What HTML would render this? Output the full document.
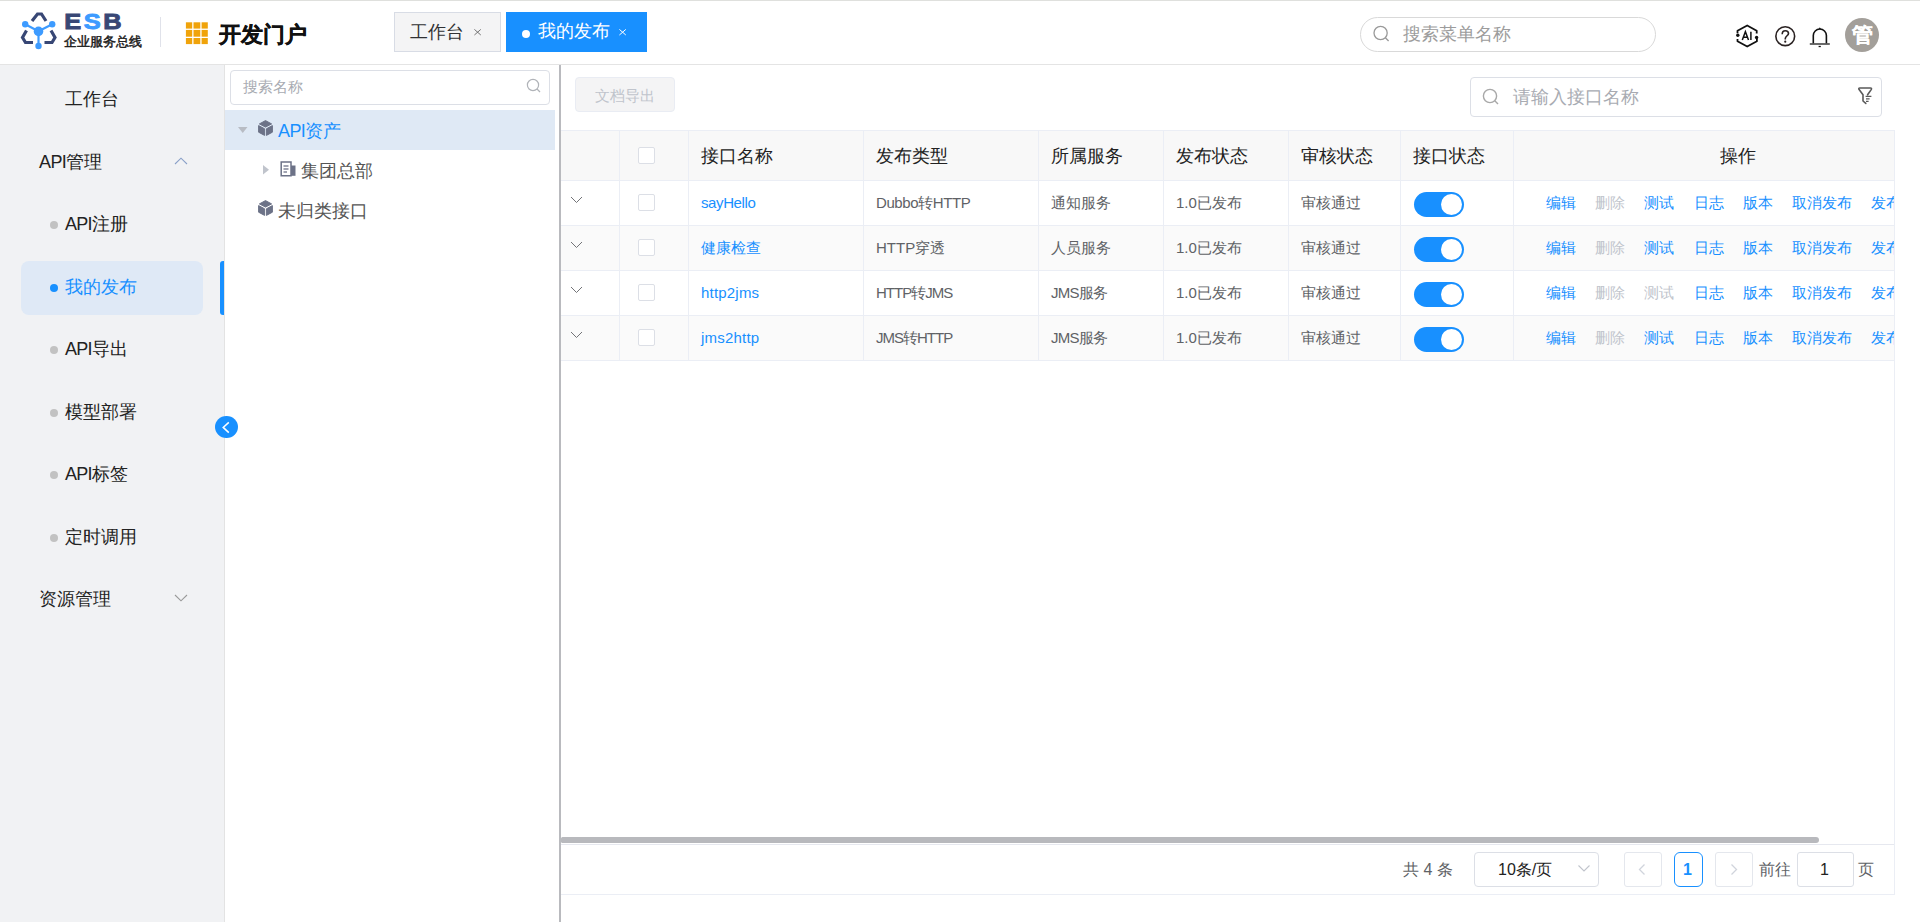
<!DOCTYPE html>
<html><head><meta charset="utf-8">
<style>
*{box-sizing:border-box;margin:0;padding:0}
html,body{width:1920px;height:922px;overflow:hidden;background:#fff;font-family:"Liberation Sans",sans-serif;color:#303133}
.a{position:absolute}
.t{position:absolute;white-space:nowrap;line-height:1}
#hdr{left:0;top:0;width:1920px;height:65px;background:#fff;border-top:1px solid #dfe0dd;border-bottom:1px solid #e4e4e4}
#side{left:0;top:65px;width:225px;height:857px;background:#f1f2f4;border-right:1px solid #e3e3e3}
#tree{left:225px;top:65px;width:334px;height:857px;background:#fff}
#vdiv{left:559px;top:65px;width:2px;height:857px;background:#b9babe}
.mi{font-size:18px;color:#222}
.dot{position:absolute;width:8px;height:8px;border-radius:50%;background:#c2c2c2}
.chev{position:absolute}
.cell{position:absolute;font-size:15px;color:#606266;white-space:nowrap;line-height:1}
.lat{letter-spacing:-0.4px}
.hcell{position:absolute;font-size:18px;color:#222;white-space:nowrap;line-height:1}
.vb{position:absolute;width:1px;background:#ebeef5}
.hb{position:absolute;height:1px;background:#ebeef5}
.cb{position:absolute;width:17px;height:17px;border:1px solid #dcdfe6;border-radius:2px;background:#fff}
.sw{position:absolute;width:50px;height:25px;border-radius:13px;background:#1890ff}
.sw::after{content:"";position:absolute;right:2px;top:2px;width:21px;height:21px;border-radius:50%;background:#fff}
.op{position:absolute;font-size:15px;color:#1890ff;white-space:nowrap;line-height:1}
.op.dis{color:#c0c4cc}
</style></head><body>

<!-- HEADER -->
<div id="hdr" class="a">
  <!-- logo icon -->
  <svg class="a" style="left:18px;top:9px" width="42" height="42" viewBox="18 10 42 42">
    <g fill="none" stroke="#384775" stroke-width="3.2" stroke-linejoin="miter" stroke-linecap="butt">
      <polyline points="32,21 37.5,14 41.5,14 46,21"/>
      <polyline points="26.5,30.5 22.5,37.5 25.5,42.5 33,42.5"/>
      <polyline points="51,30.5 55,37.5 52,42.5 44.5,42.5"/>
    </g>
    <g stroke="#3d9bff" stroke-width="2.2">
      <line x1="25.2" y1="24.2" x2="38.5" y2="31.2"/>
      <line x1="52.2" y1="24.2" x2="38.5" y2="31.2"/>
      <line x1="38.5" y1="31.2" x2="38.5" y2="46"/>
    </g>
    <g fill="#3d9bff">
      <circle cx="25.2" cy="24.2" r="3.2"/>
      <circle cx="52.2" cy="24.2" r="3.2"/>
      <circle cx="38.5" cy="31.4" r="4.8"/>
      <circle cx="38.5" cy="46" r="3.2"/>
    </g>
  </svg>
  <svg class="a" style="left:60px;top:8px" width="70" height="26" viewBox="60 8 70 26">
    <text x="64.2" y="27.9" font-family="Liberation Sans" font-weight="bold" font-size="22.5" fill="#384775" stroke="#384775" stroke-width="0.9" transform="translate(64.2 0) scale(1.13 1) translate(-64.2 0)" letter-spacing="2.3">E<tspan fill="#3d9bff" stroke="#3d9bff">S</tspan>B</text>
  </svg>
  <div class="t" style="left:64px;top:34px;font-size:13px;color:#1a1a1a;-webkit-text-stroke:0.45px #1a1a1a">企业服务总线</div>
  <div class="a" style="left:160px;top:16px;width:1px;height:30px;background:#e0e2ea"></div>
  <!-- grid -->
  <svg class="a" style="left:185px;top:21px" width="24" height="23" viewBox="0 0 24 23">
    <g fill="#f0a30a">
      <rect x="0.9" y="0.3" width="6.3" height="6.3"/><rect x="8.5" y="0.3" width="6.8" height="6.3"/><rect x="16.6" y="0.3" width="6.2" height="6.3"/>
      <rect x="0.9" y="7.9" width="6.3" height="6.8"/><rect x="8.5" y="7.9" width="6.8" height="6.8"/><rect x="16.6" y="7.9" width="6.2" height="6.8"/>
      <rect x="0.9" y="16" width="6.3" height="6.1"/><rect x="8.5" y="16" width="6.8" height="6.1"/><rect x="16.6" y="16" width="6.2" height="6.1"/>
    </g>
  </svg>
  <div class="t" style="left:218.5px;top:23px;font-size:22px;font-weight:bold;color:#111;-webkit-text-stroke:0.3px #111">开发门户</div>

  <!-- tabs -->
  <div class="a" style="left:394px;top:11px;width:107px;height:40px;background:#f4f4f5;border:1px solid #d8dce5"></div>
  <div class="t" style="left:410px;top:21.7px;font-size:18px;color:#303133">工作台</div>
  <svg class="a" style="left:470px;top:24px" width="14" height="14" viewBox="470 25 14 14"><path d="M474.4,29.4 L480.8,35 M480.8,29.4 L474.4,35" stroke="#666" stroke-width="0.9"/></svg>
  <div class="a" style="left:506px;top:11px;width:141px;height:40px;background:#1890ff"></div>
  <div class="a" style="left:522px;top:28.6px;width:8px;height:8px;border-radius:50%;background:#fff"></div>
  <div class="t" style="left:538px;top:21px;font-size:18px;color:#fff">我的发布</div>
  <svg class="a" style="left:615px;top:24px" width="14" height="14" viewBox="615 25 14 14"><path d="M619.4,29.4 L625.8,35 M625.8,29.4 L619.4,35" stroke="#fff" stroke-width="1"/></svg>

  <!-- header search -->
  <div class="a" style="left:1360px;top:15.5px;width:296px;height:35.5px;border:1px solid #d9d9d9;border-radius:18px;background:#fff"></div>
  <svg class="a" style="left:1372px;top:23px" width="20" height="20" viewBox="0 0 20 20"><circle cx="8.6" cy="9" r="6.6" fill="none" stroke="#999" stroke-width="1.3"/><line x1="13.4" y1="13.8" x2="16.6" y2="17" stroke="#999" stroke-width="1.3"/></svg>
  <div class="t" style="left:1403px;top:23.5px;font-size:18px;color:#9c9c9c">搜索菜单名称</div>

  <!-- icons -->
  <svg class="a" style="left:1720px;top:9px" width="120" height="50" viewBox="1720 10 120 50">
    <g fill="none" stroke="#111" stroke-width="1.8" stroke-linejoin="round">
      <path d="M1737.5,33.3 V30.8 L1747.2,25.5 L1756.7,30.8 V33.4"/>
      <path d="M1737.5,38.9 V41.2 L1747.2,46.5 L1756.9,41.2 V38.5"/>
    </g>
    <circle cx="1737.8" cy="35.3" r="1.7" fill="#111"/>
    <circle cx="1756.6" cy="37.5" r="1.7" fill="#111"/>
    <path d="M1742.3,40.1 L1745.4,31.7 L1748.5,40.1 M1743.4,37.3 H1747.4 M1750.9,31.7 V40.1" fill="none" stroke="#111" stroke-width="1.5"/>
    <circle cx="1785.25" cy="36.2" r="9.4" fill="none" stroke="#2a2222" stroke-width="1.6"/>
    <path d="M1782.2,34.2 C1782.2,31.8 1783.5,30.7 1785.3,30.7 C1787.1,30.7 1788.5,31.9 1788.5,33.5 C1788.5,35.6 1785.3,36 1785.3,38.6 V39.6" fill="none" stroke="#2a2222" stroke-width="1.6"/>
    <circle cx="1785.25" cy="41.7" r="1.1" fill="#2a2222"/>
    <path d="M1813.3,43.6 V35.6 A6.55,6.55 0 0 1 1826.4,35.6 V43.6" fill="none" stroke="#111" stroke-width="1.6"/>
    <path d="M1818.6,29.2 L1819.8,27.3 L1821,29.2 Z" fill="#111"/>
    <line x1="1809.8" y1="44" x2="1829.8" y2="44" stroke="#444" stroke-width="1.6"/>
    <line x1="1818.6" y1="46.5" x2="1820.8" y2="46.5" stroke="#111" stroke-width="1.3"/>
  </svg>
  <div class="a" style="left:1845px;top:17px;width:34px;height:34px;border-radius:50%;background:#a39f9a"></div>
  <div class="t" style="left:1852px;top:23px;font-size:21px;font-weight:bold;color:#fff;-webkit-text-stroke:0.15px #fff">管</div>
</div>

<!-- SIDEBAR -->
<div id="side" class="a">
  <div class="t mi" style="left:65px;top:25px">工作台</div>
  <div class="t mi" style="left:39px;top:88px"><span style="letter-spacing:-0.6px">API</span>管理</div>
  <svg class="a" style="left:174px;top:92px" width="14" height="8" viewBox="0 0 14 8"><polyline points="1,7 7,1.2 13,7" fill="none" stroke="#8aa0c8" stroke-width="1.1"/></svg>
  <div class="dot" style="left:50px;top:156px"></div>
  <div class="t mi" style="left:65px;top:150px"><span style="letter-spacing:-0.8px">API</span>注册</div>
  <div class="a" style="left:21px;top:196px;width:182px;height:54px;border-radius:8px;background:#dfe9f6"></div>
  <div class="a" style="left:220px;top:196px;width:4px;height:54px;border-radius:3px 0 0 3px;background:#1890ff"></div>
  <div class="dot" style="left:50px;top:219px;background:#1890ff"></div>
  <div class="t mi" style="left:65px;top:213px;color:#1890ff">我的发布</div>
  <div class="dot" style="left:50px;top:281px"></div>
  <div class="t mi" style="left:65px;top:275px"><span style="letter-spacing:-0.8px">API</span>导出</div>
  <div class="dot" style="left:50px;top:344px"></div>
  <div class="t mi" style="left:65px;top:338px">模型部署</div>
  <div class="dot" style="left:50px;top:406px"></div>
  <div class="t mi" style="left:65px;top:400px"><span style="letter-spacing:-0.8px">API</span>标签</div>
  <div class="dot" style="left:50px;top:469px"></div>
  <div class="t mi" style="left:65px;top:463px">定时调用</div>
  <div class="t mi" style="left:39px;top:525px">资源管理</div>
  <svg class="a" style="left:174px;top:529px" width="14" height="8" viewBox="0 0 14 8"><polyline points="1,1 7,6.8 13,1" fill="none" stroke="#999" stroke-width="1.1"/></svg>
</div>

<!-- TREE -->
<div id="tree" class="a">
  <div class="a" style="left:5px;top:5px;width:320px;height:35px;border:1px solid #dcdfe6;border-radius:4px"></div>
  <div class="t" style="left:18px;top:14px;font-size:15px;color:#a8abb2">搜索名称</div>
  <svg class="a" style="left:301px;top:13px" width="16" height="16" viewBox="0 0 16 16"><circle cx="7" cy="7" r="5.6" fill="none" stroke="#b0b3b8" stroke-width="1.2"/><line x1="11" y1="11" x2="14" y2="14" stroke="#b0b3b8" stroke-width="1.2"/></svg>
  <div class="a" style="left:0;top:45px;width:330px;height:40px;background:#dfe9f5"></div>
  <svg class="a" style="left:12px;top:61px" width="12" height="8" viewBox="0 0 12 8"><polygon points="1,1 10.5,1 5.75,7" fill="#b8bcc4"/></svg>
  <svg class="a" style="left:32px;top:54px" width="17" height="18" viewBox="0 0 17 18">
    <g fill="#6c7287" stroke="#6c7287" stroke-width="1" stroke-linejoin="round">
    <polygon points="8.5,1.6 14.6,4.9 8.5,8.1 2.4,4.9"/>
    <polygon points="1.6,6.6 7.6,9.8 7.6,16.4 1.6,13.2"/>
    <polygon points="15.4,6.6 9.4,9.8 9.4,16.4 15.4,13.2"/>
    </g>
  </svg>
  <div class="t" style="left:53px;top:57px;font-size:18px;color:#1890ff"><span style="letter-spacing:-0.6px">API</span>资产</div>
  <svg class="a" style="left:37px;top:99px" width="8" height="12" viewBox="0 0 8 12"><polygon points="1,1 7,5.8 1,10.5" fill="#c0c4cc"/></svg>
  <svg class="a" style="left:55px;top:96px" width="17" height="16" viewBox="0 0 17 16">
    <path d="M1.2,1 H11 V14.8 H1.2 Z" fill="none" stroke="#6c7287" stroke-width="1.5"/>
    <path d="M11,4.5 H15.5 V14.8 H11" fill="#6c7287"/>
    <line x1="3.5" y1="5" x2="8.5" y2="5" stroke="#6c7287" stroke-width="1.3"/>
    <line x1="3.5" y1="8" x2="8.5" y2="8" stroke="#6c7287" stroke-width="1.3"/>
    <line x1="3.5" y1="11" x2="7" y2="11" stroke="#6c7287" stroke-width="1.3"/>
  </svg>
  <div class="t" style="left:76px;top:96.8px;font-size:18px;color:#555">集团总部</div>
  <svg class="a" style="left:32px;top:134px" width="17" height="18" viewBox="0 0 17 18">
    <g fill="#6c7287" stroke="#6c7287" stroke-width="1" stroke-linejoin="round">
    <polygon points="8.5,1.6 14.6,4.9 8.5,8.1 2.4,4.9"/>
    <polygon points="1.6,6.6 7.6,9.8 7.6,16.4 1.6,13.2"/>
    <polygon points="15.4,6.6 9.4,9.8 9.4,16.4 15.4,13.2"/>
    </g>
  </svg>
  <div class="t" style="left:53px;top:137px;font-size:18px;color:#555">未归类接口</div>
</div>
<div id="vdiv" class="a"></div>

<!-- MAIN -->
<div class="a" style="left:575px;top:77px;width:100px;height:35px;background:#f4f4f5;border:1px solid #e9ecf3;border-radius:4px"></div>
<div class="t" style="left:595px;top:88px;font-size:15px;color:#c0c4cc">文档导出</div>

<div class="a" style="left:1470px;top:77px;width:412px;height:40px;border:1px solid #dcdfe6;border-radius:4px"></div>
<svg class="a" style="left:1482px;top:88px" width="18" height="18" viewBox="0 0 18 18"><circle cx="8" cy="8" r="6.6" fill="none" stroke="#a8a8a8" stroke-width="1.4"/><line x1="12.8" y1="12.8" x2="16" y2="16" stroke="#a8a8a8" stroke-width="1.4"/></svg>
<div class="t" style="left:1513px;top:88px;font-size:18px;color:#a8abb2">请输入接口名称</div>
<svg class="a" style="left:1850px;top:80px" width="30" height="30" viewBox="1850 80 30 30">
  <path d="M1867.6,94.8 L1871.2,89.6 Q1872.1,88 1870.4,88 H1859.9 Q1858.2,88 1859.1,89.6 L1863,94.8 V101 L1865.8,103.4" fill="none" stroke="#5a5a5a" stroke-width="1.6" stroke-linejoin="round" stroke-linecap="round"/>
  <path d="M1865.6,96.4 H1871.4 M1866,98.9 H1869.6 M1866,101.3 H1868.6" fill="none" stroke="#5a5a5a" stroke-width="1.3"/>
</svg>

<!-- TABLE -->
<div class="a" style="left:561px;top:130px;width:1333px;height:50px;background:#f8f8f8"></div>
<div class="a" style="left:561px;top:225px;width:1333px;height:45px;background:#fafafa"></div>
<div class="a" style="left:561px;top:315px;width:1333px;height:45px;background:#fafafa"></div>
<div class="hb" style="left:561px;top:130px;width:1333px"></div>
<div class="hb" style="left:561px;top:180px;width:1333px"></div>
<div class="hb" style="left:561px;top:225px;width:1333px"></div>
<div class="hb" style="left:561px;top:270px;width:1333px"></div>
<div class="hb" style="left:561px;top:315px;width:1333px"></div>
<div class="hb" style="left:561px;top:360px;width:1333px"></div>
<div class="vb" style="left:619px;top:130px;height:230px"></div>
<div class="vb" style="left:688px;top:130px;height:230px"></div>
<div class="vb" style="left:863px;top:130px;height:230px"></div>
<div class="vb" style="left:1038px;top:130px;height:230px"></div>
<div class="vb" style="left:1163px;top:130px;height:230px"></div>
<div class="vb" style="left:1288px;top:130px;height:230px"></div>
<div class="vb" style="left:1400px;top:130px;height:230px"></div>
<div class="vb" style="left:1513px;top:130px;height:230px"></div>
<div class="vb" style="left:1894px;top:130px;height:765px"></div>

<div class="cb" style="left:638px;top:147px"></div>
<div class="hcell" style="left:701px;top:146.7px">接口名称</div>
<div class="hcell" style="left:876px;top:146.7px">发布类型</div>
<div class="hcell" style="left:1051px;top:146.7px">所属服务</div>
<div class="hcell" style="left:1176px;top:146.7px">发布状态</div>
<div class="hcell" style="left:1301px;top:146.7px">审核状态</div>
<div class="hcell" style="left:1413px;top:146.7px">接口状态</div>
<div class="hcell" style="left:1720px;top:146.7px">操作</div>

<div id="rows">
<svg class="a" style="left:570px;top:196px" width="13" height="8" viewBox="0 0 13 8"><polyline points="1,1 6.5,6.5 12,1" fill="none" stroke="#6a6c70" stroke-width="0.95"/></svg>
<div class="cb" style="left:638px;top:194px"></div>
<div class="cell" style="left:701px;top:195px;color:#1890ff;letter-spacing:-0.4px">sayHello</div>
<div class="cell" style="left:876px;top:195px;letter-spacing:-0.4px">Dubbo转HTTP</div>
<div class="cell" style="left:1051px;top:195px;letter-spacing:0px">通知服务</div>
<div class="cell" style="left:1176px;top:195px">1.0已发布</div>
<div class="cell" style="left:1301px;top:195px">审核通过</div>
<div class="sw" style="left:1414px;top:192px"></div>
<div class="op" style="left:1546px;top:195px">编辑</div>
<div class="op dis" style="left:1595px;top:195px">删除</div>
<div class="op" style="left:1644px;top:195px">测试</div>
<div class="op" style="left:1694px;top:195px">日志</div>
<div class="op" style="left:1743px;top:195px">版本</div>
<div class="op" style="left:1792px;top:195px">取消发布</div>
<div class="a" style="left:1871px;top:195px;width:23px;overflow:hidden"><div class="op" style="position:static">发布</div></div>
<svg class="a" style="left:570px;top:241px" width="13" height="8" viewBox="0 0 13 8"><polyline points="1,1 6.5,6.5 12,1" fill="none" stroke="#6a6c70" stroke-width="0.95"/></svg>
<div class="cb" style="left:638px;top:239px"></div>
<div class="cell" style="left:701px;top:240px;color:#1890ff;letter-spacing:0px">健康检查</div>
<div class="cell" style="left:876px;top:240px;letter-spacing:0px">HTTP穿透</div>
<div class="cell" style="left:1051px;top:240px;letter-spacing:0px">人员服务</div>
<div class="cell" style="left:1176px;top:240px">1.0已发布</div>
<div class="cell" style="left:1301px;top:240px">审核通过</div>
<div class="sw" style="left:1414px;top:237px"></div>
<div class="op" style="left:1546px;top:240px">编辑</div>
<div class="op dis" style="left:1595px;top:240px">删除</div>
<div class="op" style="left:1644px;top:240px">测试</div>
<div class="op" style="left:1694px;top:240px">日志</div>
<div class="op" style="left:1743px;top:240px">版本</div>
<div class="op" style="left:1792px;top:240px">取消发布</div>
<div class="a" style="left:1871px;top:240px;width:23px;overflow:hidden"><div class="op" style="position:static">发布</div></div>
<svg class="a" style="left:570px;top:286px" width="13" height="8" viewBox="0 0 13 8"><polyline points="1,1 6.5,6.5 12,1" fill="none" stroke="#6a6c70" stroke-width="0.95"/></svg>
<div class="cb" style="left:638px;top:284px"></div>
<div class="cell" style="left:701px;top:285px;color:#1890ff;letter-spacing:0.2px">http2jms</div>
<div class="cell" style="left:876px;top:285px;letter-spacing:-1.0px">HTTP转JMS</div>
<div class="cell" style="left:1051px;top:285px;letter-spacing:-0.7px">JMS服务</div>
<div class="cell" style="left:1176px;top:285px">1.0已发布</div>
<div class="cell" style="left:1301px;top:285px">审核通过</div>
<div class="sw" style="left:1414px;top:282px"></div>
<div class="op" style="left:1546px;top:285px">编辑</div>
<div class="op dis" style="left:1595px;top:285px">删除</div>
<div class="op dis" style="left:1644px;top:285px">测试</div>
<div class="op" style="left:1694px;top:285px">日志</div>
<div class="op" style="left:1743px;top:285px">版本</div>
<div class="op" style="left:1792px;top:285px">取消发布</div>
<div class="a" style="left:1871px;top:285px;width:23px;overflow:hidden"><div class="op" style="position:static">发布</div></div>
<svg class="a" style="left:570px;top:331px" width="13" height="8" viewBox="0 0 13 8"><polyline points="1,1 6.5,6.5 12,1" fill="none" stroke="#6a6c70" stroke-width="0.95"/></svg>
<div class="cb" style="left:638px;top:329px"></div>
<div class="cell" style="left:701px;top:330px;color:#1890ff;letter-spacing:0.2px">jms2http</div>
<div class="cell" style="left:876px;top:330px;letter-spacing:-1.0px">JMS转HTTP</div>
<div class="cell" style="left:1051px;top:330px;letter-spacing:-0.7px">JMS服务</div>
<div class="cell" style="left:1176px;top:330px">1.0已发布</div>
<div class="cell" style="left:1301px;top:330px">审核通过</div>
<div class="sw" style="left:1414px;top:327px"></div>
<div class="op" style="left:1546px;top:330px">编辑</div>
<div class="op dis" style="left:1595px;top:330px">删除</div>
<div class="op" style="left:1644px;top:330px">测试</div>
<div class="op" style="left:1694px;top:330px">日志</div>
<div class="op" style="left:1743px;top:330px">版本</div>
<div class="op" style="left:1792px;top:330px">取消发布</div>
<div class="a" style="left:1871px;top:330px;width:23px;overflow:hidden"><div class="op" style="position:static">发布</div></div>
</div><!--/rows-->

<!-- scrollbar + pagination -->
<div class="a" style="left:561px;top:837px;width:1258px;height:6px;border-radius:1.5px 3px 3px 1.5px;background:#b8b9bd"></div>
<div class="hb" style="left:561px;top:844px;width:1333px;background:#e6e8ef"></div>
<div class="hb" style="left:561px;top:894px;width:1333px"></div>

<div class="t" style="left:1403px;top:862px;font-size:16px;color:#606266">共 4 条</div>
<div class="a" style="left:1474px;top:852px;width:125px;height:35px;border:1px solid #dcdfe6;border-radius:4px"></div>
<div class="t" style="left:1498px;top:862px;font-size:16px;color:#222">10条/页</div>
<svg class="a" style="left:1577px;top:864px" width="14" height="9" viewBox="0 0 14 9"><polyline points="1.5,1.5 7,7 12.5,1.5" fill="none" stroke="#c0c4cc" stroke-width="1.1"/></svg>
<div class="a" style="left:1624px;top:852px;width:38px;height:35px;border:1px solid #e4e7ed;border-radius:3px"></div>
<svg class="a" style="left:1637px;top:863px" width="10" height="13" viewBox="0 0 10 13"><polyline points="7.5,1.5 2.5,6.5 7.5,11.5" fill="none" stroke="#d0d4dc" stroke-width="1.3"/></svg>
<div class="a" style="left:1674px;top:852px;width:29px;height:35px;border:1.5px solid #1890ff;border-radius:6px"></div>
<div class="t" style="left:1683px;top:862px;font-size:16px;font-weight:bold;color:#1890ff">1</div>
<div class="a" style="left:1715px;top:852px;width:38px;height:35px;border:1px solid #e4e7ed;border-radius:3px"></div>
<svg class="a" style="left:1729px;top:863px" width="10" height="13" viewBox="0 0 10 13"><polyline points="2.5,1.5 7.5,6.5 2.5,11.5" fill="none" stroke="#d0d4dc" stroke-width="1.3"/></svg>
<div class="t" style="left:1759px;top:862px;font-size:16px;color:#606266">前往</div>
<div class="a" style="left:1797px;top:852px;width:57px;height:35px;border:1px solid #dcdfe6;border-radius:3px"></div>
<div class="t" style="left:1820px;top:862px;font-size:16px;color:#222">1</div>
<div class="t" style="left:1858px;top:862px;font-size:16px;color:#606266">页</div>

<!-- collapse btn -->
<div class="a" style="left:215px;top:415.8px;width:23px;height:22.4px;border-radius:50%;background:#1890ff"></div>
<svg class="a" style="left:215px;top:416px" width="23" height="23" viewBox="0 0 23 23"><polyline points="13.8,6.4 8.2,11.4 13.8,16.6" fill="none" stroke="#fff" stroke-width="1.5"/></svg>

</body></html>
